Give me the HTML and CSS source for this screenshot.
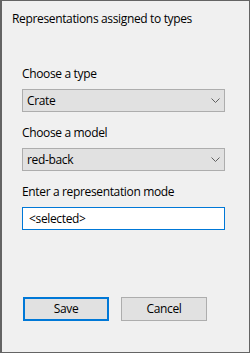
FILE: index.html
```html
<!DOCTYPE html>
<html lang="en">
<head>
    <meta charset="UTF-8">
    <meta name="viewport" content="width=device-width, initial-scale=1.0">
    <title>Representations assigned to types</title>
    <link rel="stylesheet" href="styles.css">
</head>
<body>
    <div class="dialog">
        <h1 class="dialog-title">Representations assigned to types</h1>
        <form class="dialog-form">
            <div class="form-group">
                <label class="field-label">Choose a type</label>
                <div class="combo">
                    <span class="combo-value">Crate</span>
                    <svg class="combo-arrow" width="9" height="5" viewBox="0 0 9 5">
                        <polyline points="0.5,0.5 4.5,4.5 8.5,0.5" fill="none" stroke="#606060" stroke-width="1"/>
                    </svg>
                </div>
            </div>
            <div class="form-group">
                <label class="field-label">Choose a model</label>
                <div class="combo">
                    <span class="combo-value">red-back</span>
                    <svg class="combo-arrow" width="9" height="5" viewBox="0 0 9 5">
                        <polyline points="0.5,0.5 4.5,4.5 8.5,0.5" fill="none" stroke="#606060" stroke-width="1"/>
                    </svg>
                </div>
            </div>
            <div class="form-group">
                <label class="field-label" for="mode">Enter a representation mode</label>
                <input type="text" id="mode" class="text-field" value="<selected>">
            </div>
            <div class="button-row">
                <button type="button" class="btn btn-default">Save</button>
                <button type="button" class="btn">Cancel</button>
            </div>
        </form>
    </div>
</body>
</html>
```

FILE: styles.css
```css
* {
    margin: 0;
    padding: 0;
    box-sizing: border-box;
}

body {
    font-family: 'Open Sans', 'Noto Sans', sans-serif;
    font-size: 12px;
    line-height: 16px;
    letter-spacing: -0.35px;
    color: #000;
    background: #f0f0f0;
}

.dialog {
    width: 250px;
    height: 353px;
    background: #f0f0f0;
    border: 1px solid #646464;
    border-left-width: 2px;
    padding: 10px 24px 0 20px;
}

.dialog-title {
    font-size: 12px;
    font-weight: normal;
    margin-left: -10px;
    margin-bottom: 39px;
}

.form-group {
    margin-bottom: 13px;
}

.field-label {
    display: block;
    margin-bottom: 7px;
}

.combo {
    display: flex;
    align-items: center;
    justify-content: space-between;
    height: 23px;
    background: #e1e1e1;
    border: 1px solid #adadad;
    padding: 0 4px 0 4px;
}

.combo-arrow {
    display: block;
}

.text-field {
    display: block;
    width: 100%;
    height: 23px;
    background: #fff;
    border: 1px solid #0078d7;
    padding: 0 6px;
    font: inherit;
    letter-spacing: inherit;
    color: #000;
    outline: none;
}

/* margin collapses with the last group's bottom margin */
.button-row {
    display: flex;
    gap: 12px;
    margin-top: 67px;
    padding-left: 1px;
}

.btn {
    width: 86px;
    height: 24px;
    background: #e1e1e1;
    border: 1px solid #adadad;
    font: inherit;
    letter-spacing: inherit;
    color: #000;
}

.btn-default {
    border: 2px solid #0078d7;
}
```
